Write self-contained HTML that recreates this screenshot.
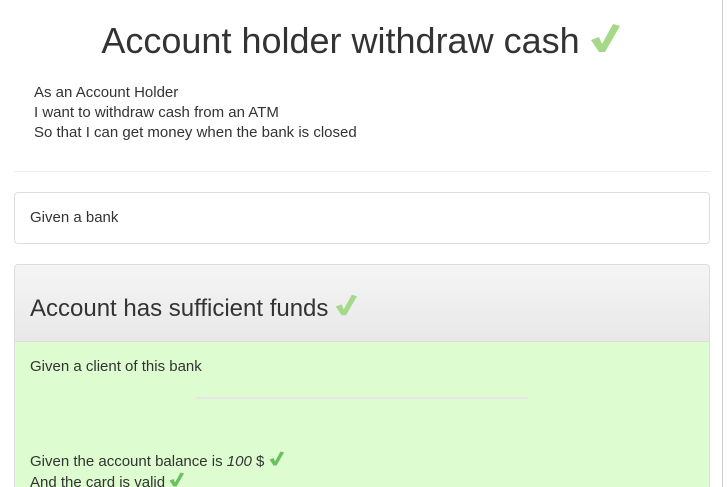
<!DOCTYPE html>
<html style="height:487px;overflow:hidden"><head><style>
body{margin:0;width:727px;height:487px;overflow:hidden;background:#fff;font-family:"Liberation Sans",sans-serif;color:#333;font-size:15px;position:relative}
.a{position:absolute}
.ck{display:inline-block;vertical-align:baseline}
</style></head><body>
<div class="a" style="left:722px;top:0;width:1px;height:487px;background:#ccc"></div>
<div class="a" style="left:0;width:727px;top:19px;text-align:center;font-size:36px;line-height:44px;color:#333;padding-right:6px;box-sizing:border-box">Account holder withdraw cash <svg class="ck" width="30" height="30" viewBox="0 0 30 30"><path d="M1 17 L9 14 L12 21 L23 1 L30 3 L15 29 L9 29 Z" fill="#a6d88a"/></svg></div>
<div class="a" style="left:34px;top:83px;line-height:20px">As an Account Holder<br>I want to withdraw cash from an ATM<br>So that I can get money when the bank is closed</div>
<div class="a" style="left:14px;top:171px;width:696px;height:1px;background:#eee"></div>
<div class="a" style="left:14px;top:192px;width:694px;height:50px;border:1px solid #ddd;border-radius:4px"></div>
<div class="a" style="left:30px;top:209px">Given a bank</div>
<div class="a" style="left:14px;top:264px;width:694px;height:222px;border:1px solid #ddd;border-bottom:none;border-radius:4px 4px 0 0;background:#ddfccf;overflow:hidden">
<div style="height:76px;background:linear-gradient(#f5f5f5,#e8e8e8);border-bottom:1px solid #ddd"></div>
</div>
<div class="a" style="left:30px;top:294px;font-size:24px;line-height:30px">Account has sufficient funds <svg class="ck" width="22" height="22" viewBox="0 0 30 30"><path d="M1 17 L9 14 L12 21 L23 1 L30 3 L15 29 L9 29 Z" fill="#a6d88a"/></svg></div>
<div class="a" style="left:30px;top:358px">Given a client of this bank</div>
<div class="a" style="left:196px;top:397px;width:332px;height:2px;background:#e6e6e6"></div>
<div class="a" style="left:30px;top:451px;line-height:20px;height:36px;overflow:hidden">Given the account balance is <i>100</i> $ <svg class="ck" width="15" height="15" viewBox="0 0 30 30"><path d="M1 17 L9 14 L12 21 L23 1 L30 3 L15 29 L9 29 Z" fill="#6cc060"/></svg><br>And the card is valid <svg class="ck" width="15" height="15" viewBox="0 0 30 30"><path d="M1 17 L9 14 L12 21 L23 1 L30 3 L15 29 L9 29 Z" fill="#6cc060"/></svg></div>
</body></html>
